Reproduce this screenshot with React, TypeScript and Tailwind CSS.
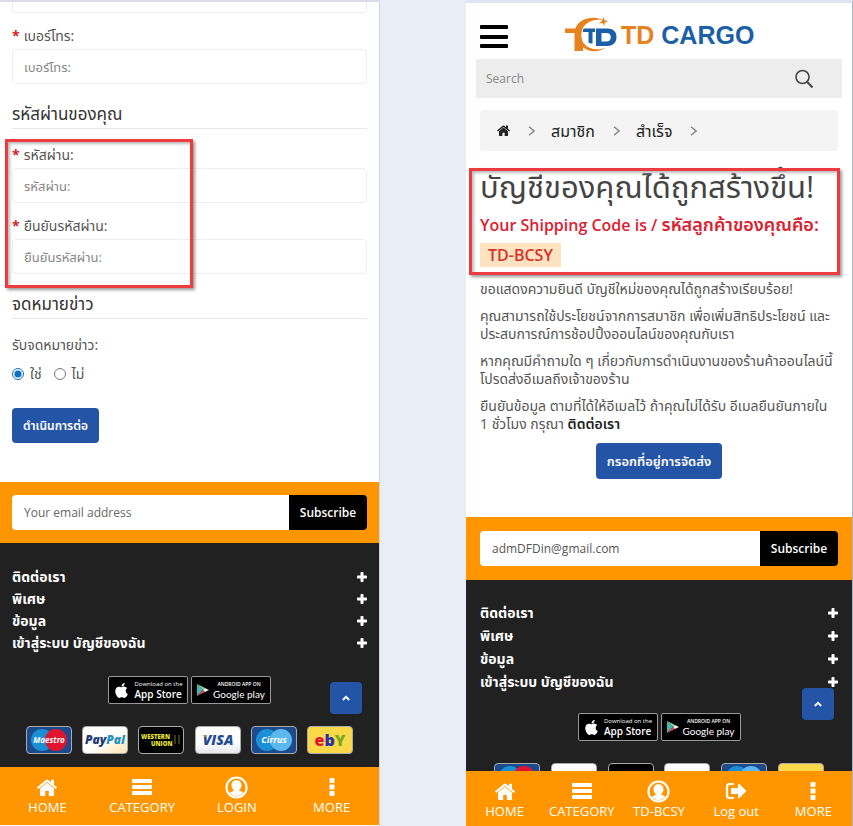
import type { ReactNode } from "react";
import { FaApple } from "react-icons/fa";

const FOOTER_LINKS = ["ติดต่อเรา", "พิเศษ", "ข้อมูล", "เข้าสู่ระบบ บัญชีของฉัน"];

function HomeIcon({ className }: { className: string }) {
  return (
    <svg viewBox="0 0 20 17" className={className} fill="currentColor" role="img" aria-label="Home">
      <path d="M10 3.800 3 9.600V16c0 .5.4.9.9.9h4.300v-5h3.600v5h4.300c.5 0 .9-.4.9-.9V9.600z" />
      <path d="M19.700 8.100 17 5.900V1.200c0-.3-.2-.5-.5-.5h-2.200c-.3 0-.5.2-.5.500v2.100L11.200 1.100c-.7-.6-1.700-.6-2.400 0L.3 8.100c-.2.2-.2.5-.1.700l.8.900c.2.200.5.200.7.100L10 2.900l8.300 6.900c.2.100.5.100.7-.1l.8-.9c.2-.2.1-.5-.1-.7z" />
    </svg>
  );
}

function BarsIcon() {
  return (
    <svg viewBox="0 0 20 16" className="h-4 w-5" fill="currentColor" aria-hidden="true">
      <rect width="20" height="4" rx="0.800" />
      <rect width="20" height="4" y="6" rx="0.800" />
      <rect width="20" height="4" y="12" rx="0.800" />
    </svg>
  );
}

function UserIcon() {
  return (
    <svg viewBox="0 0 24 24" className="size-[23px]" aria-hidden="true">
      <defs>
        <clipPath id="user-clip">
          <circle cx="12" cy="12" r="9" />
        </clipPath>
      </defs>
      <circle cx="12" cy="12" r="10.5" fill="none" stroke="currentColor" strokeWidth="2.200" />
      <g clipPath="url(#user-clip)" fill="currentColor">
        <path d="M12 4.500c3.200 0 5.200 2.200 5.200 5.100 0 2.200-.9 3.900-2.400 5v.8c2.500.8 4.700 1.700 5.200 3.400V23H4v-4c.5-1.700 2.700-2.800 5.200-3.600v-.8c-1.500-1.100-2.400-2.800-2.400-5 0-2.900 2-5.100 5.200-5.100z" />
      </g>
    </svg>
  );
}

function MoreIcon() {
  return (
    <svg viewBox="0 0 6 18" className="h-[18px] w-1.5" fill="currentColor" aria-hidden="true">
      <rect width="5" height="5" x="0.5" rx="0.8" />
      <rect width="5" height="5" x="0.5" y="6.500" rx="0.8" />
      <rect width="5" height="5" x="0.5" y="13" rx="0.8" />
    </svg>
  );
}

function LogoutIcon() {
  return (
    <svg viewBox="0 0 22 18" className="h-[18px] w-[22px]" aria-hidden="true">
      <path d="M8 2H4.500A2.500 2.500 0 0 0 2 4.500v9A2.500 2.500 0 0 0 4.500 16H8" fill="none" stroke="currentColor" strokeWidth="2.200" strokeLinecap="round" />
      <path d="M7 6h6V2.200c0-.7.7-.9 1.200-.4l6.500 6.500c.4.4.4 1 0 1.400l-6.500 6.500c-.5.5-1.200.3-1.200-.4V12H7c-.6 0-1-.4-1-1V7c0-.6.4-1 1-1z" fill="currentColor" />
    </svg>
  );
}

function PlusIcon() {
  return (
    <svg viewBox="0 0 10 10" className="size-2.5" fill="currentColor" aria-hidden="true">
      <path d="M4.200 0h1.600c.4 0 .7.300.7.700v2.800h2.800c.4 0 .7.300.7.700v1.600c0 .4-.3.700-.7.700H6.500v2.800c0 .4-.3.700-.7.700H4.200c-.4 0-.7-.3-.7-.7V6.500H.7c-.4 0-.7-.3-.7-.7V4.200c0-.4.300-.7.700-.7h2.800V.7c0-.4.300-.7.700-.7z" />
    </svg>
  );
}

function SearchIcon() {
  return (
    <svg viewBox="0 0 20 20" className="size-5" fill="none" stroke="#444" strokeWidth="1.600" aria-hidden="true">
      <circle cx="8.500" cy="8" r="6.500" />
      <path d="m13 12.800 5.500 5.700" strokeWidth="2" />
    </svg>
  );
}

function Logo() {
  return (
    <a href="#" className="flex items-center gap-1" aria-label="TD CARGO">
      <svg viewBox="0 0 52 36" className="h-9 w-[52px]" aria-hidden="true">
        <path d="M0 11.500h17.500c-2 5-1.500 10 .5 14.500V34h-8.500V16H0z" fill="#e8821f" />
        <path d="M10 12C13 4 21 .5 29 .8c3 .1 6 .9 8.500 2.200C28 1.500 19 5.500 16.500 14c-2.300 8.500 3 16 11 17.800 5 1 9.500.3 13.500-1.300-4 3-9.500 4.500-15 3.500-6-1.200-10-4.500-12-9z" fill="#e8821f" />
        <path d="m38.500 0 1 3.300 3.500.9-3.200 1.500L39.300 9l-1.800-2.900-3.500.4 2.500-2.300z" fill="#e8821f" />
        <path d="M18.500 11.500H30V15h-2.500v11.500c-1.600.2-3-.1-4-.9V15h-5.700c.1-1.200.3-2.400.7-3.500z" fill="#1b5fa8" />
        <path d="M31 11.500h11.500c5.500 0 9 3 9 8.500s-3.500 9-9 9H31zm5.500 4.500v8.500h5c2.700 0 4.300-1.600 4.300-4.300S44.200 16 41.500 16z" fill="#1b5fa8" fillRule="evenodd" />
      </svg>
      <span className="font-['Liberation_Sans',sans-serif] text-[25px] leading-9 font-bold whitespace-nowrap text-[#1b5fa8]">
        <span className="text-[#e8821f]">TD</span> CARGO
      </span>
    </a>
  );
}

function Field({ id, label, type = "text" }: { id: string; label: string; type?: string }) {
  return (
    <div className="mt-2.5">
      <label htmlFor={id} className="flex h-[26px] items-center gap-1 text-sm text-[#555]">
        <span className="leading-none font-bold text-[#d9201f]">*</span>
        {label}
      </label>
      <input
        id={id}
        type={type}
        placeholder={label}
        className="block h-[35px] w-full rounded-[4px] border border-[#eee] bg-white px-[11px] text-[13px] placeholder:text-[#888]"
      />
    </div>
  );
}

function SectionTitle({ children }: { children: ReactNode }) {
  return (
    <h2 className="mt-4 flex h-[29px] items-center border-b border-[#e8e8e8] text-[17px] text-[#333]">{children}</h2>
  );
}

// red frame drawn over the part of the screen that is being explained
function Highlight({ className }: { className: string }) {
  return (
    <div
      className={`pointer-events-none absolute border-3 border-[#ee3b40] shadow-[2px_2px_3px_#999,inset_2px_2px_3px_#bbb] ${className}`}
    />
  );
}

function Subscribe({ id, email, className }: { id: string; email?: string; className: string }) {
  return (
    <form className={`flex bg-[#ff9600] ${className}`}>
      <input
        id={id}
        type="email"
        aria-label="Your email address"
        placeholder="Your email address"
        defaultValue={email}
        className="h-[35px] min-w-0 flex-1 rounded-l-[4px] bg-white px-3 text-xs text-[#555] placeholder:text-[#666]"
      />
      <button type="button" className="h-[35px] w-[78px] shrink-0 rounded-r-[4px] bg-black text-xs font-semibold text-white">
        Subscribe
      </button>
    </form>
  );
}

function StoreBadges({ className }: { className: string }) {
  return (
    <div className={`flex justify-center gap-[3px] ${className}`}>
      <a href="#" className="flex h-7 w-20 items-center justify-center gap-1 rounded-[2px] border border-[#999] bg-black text-white">
        <FaApple className="size-[17px] shrink-0" />
        <span className="flex flex-col">
          <span className="text-[6px] leading-[7px] whitespace-nowrap">Download on the</span>
          <span className="text-[10px] leading-3 font-semibold whitespace-nowrap">App Store</span>
        </span>
      </a>
      <a href="#" className="flex h-7 w-20 items-center justify-center gap-1 rounded-[2px] border border-[#999] bg-black text-white">
        <svg viewBox="0 0 12 12" className="size-3 shrink-0" aria-hidden="true">
          <path d="M0 0v12l6-6z" fill="#3fb8b0" />
          <path d="m0 0 8 4-2 2z" fill="#8fd39a" />
          <path d="m0 12 8-4-2-2z" fill="#e5484d" />
          <path d="m8 4 4 2-4 2-2-2z" fill="#eee" />
        </svg>
        <span className="flex flex-col items-center">
          <span className="text-[5px] leading-[7px] font-semibold whitespace-nowrap">ANDROID APP ON</span>
          <span className="font-['Lato',sans-serif] text-[10px] leading-3 whitespace-nowrap">Google play</span>
        </span>
      </a>
    </div>
  );
}

function PaymentCards({ className }: { className: string }) {
  const card = "h-7 w-[46px] shrink-0 rounded-[4px] border border-[#aaa]";
  return (
    <ul className={`flex justify-between ${className}`}>
      <li className={`${card} bg-[#1c4a8c]`}>
        <svg viewBox="0 0 44 26" role="img" aria-label="Maestro">
          <circle cx="15" cy="13" r="11" fill="#1b8fd6" />
          <circle cx="29" cy="13" r="11" fill="#e0142f" />
          <text x="22" y="16" textAnchor="middle" fill="#fff" className="font-['Open_Sans',sans-serif] text-[8px] font-bold italic">Maestro</text>
        </svg>
      </li>
      <li className={`${card} bg-linear-to-br from-white from-50% to-[#fce3b0]`}>
        <svg viewBox="0 0 44 26" role="img" aria-label="PayPal">
          <text x="22" y="17" textAnchor="middle" fill="#1f3d78" className="font-['Open_Sans',sans-serif] text-[12px] font-extrabold italic">
            Pay<tspan fill="#2790c3">Pal</tspan>
          </text>
        </svg>
      </li>
      <li className={`${card} bg-black`}>
        <svg viewBox="0 0 44 26" role="img" aria-label="Western Union">
          <g fill="#e8e337" className="font-['Open_Sans',sans-serif] text-[6px] font-extrabold">
            <text x="2" y="12">WESTERN</text>
            <text x="12" y="19">UNION</text>
          </g>
          <path d="M36 8v9M40 8v9" stroke="#77741f" />
        </svg>
      </li>
      <li className={`${card} bg-linear-to-b from-white from-60% to-[#e4e6ea]`}>
        <svg viewBox="0 0 44 26" role="img" aria-label="Visa">
          <text x="22" y="18" textAnchor="middle" fill="#1f4d8f" className="font-['Open_Sans',sans-serif] text-[14px] font-extrabold italic">VISA</text>
          <path d="m5.500 8 4 .2 1 2.500c-1.300-1.200-3-2-5-2.700z" fill="#e8a33a" />
        </svg>
      </li>
      <li className={`${card} bg-[#1c4a8c]`}>
        <svg viewBox="0 0 44 26" role="img" aria-label="Cirrus">
          <circle cx="15" cy="13" r="11" fill="#1b8fd6" />
          <circle cx="29" cy="13" r="11" fill="#5bb8ee" />
          <text x="22" y="16" textAnchor="middle" fill="#fff" className="font-['Open_Sans',sans-serif] text-[9px] font-bold italic">Cirrus</text>
        </svg>
      </li>
      <li className={`${card} bg-[#f9d849]`}>
        <svg viewBox="0 0 44 26" role="img" aria-label="eBay">
          <text x="22" y="19" textAnchor="middle" fill="#e0142f" className="font-['Open_Sans',sans-serif] text-[16px] font-extrabold">
            e<tspan fill="#2a2fb0">b</tspan>
            <tspan fill="#7da81f">Y</tspan>
          </text>
        </svg>
      </li>
    </ul>
  );
}

function FooterLinks({ rowClass }: { rowClass: string }) {
  return (
    <ul>
      {FOOTER_LINKS.map((name) => (
        <li key={name} className={`flex items-center justify-between text-sm font-bold text-white ${rowClass}`}>
          <a href="#">{name}</a>
          <button type="button" aria-label={`+ ${name}`}>
            <PlusIcon />
          </button>
        </li>
      ))}
    </ul>
  );
}

function BackToTop({ className }: { className: string }) {
  return (
    <button
      type="button"
      aria-label="Back to top"
      className={`absolute flex size-8 items-center justify-center rounded-[4px] bg-[#2454a6] text-white ${className}`}
    >
      <svg viewBox="0 0 8 6" className="h-1.5 w-2" fill="none" stroke="currentColor" strokeWidth="1.800" aria-hidden="true">
        <path d="m.8 5 3.200-3.200L7.200 5" />
      </svg>
    </button>
  );
}

type Tab = { label: string; icon: ReactNode };

function BottomNav({ tabs, className }: { tabs: Tab[]; className: string }) {
  return (
    <nav className={`z-10 grid shrink-0 auto-cols-fr grid-flow-col bg-[#ff9600] ${className}`}>
      {tabs.map((tab) => (
        <a key={tab.label} href="#" className="flex flex-col items-center text-[13px] leading-4 font-medium whitespace-nowrap text-white">
          <span className="flex h-6 items-center justify-center">{tab.icon}</span>
          {tab.label}
        </a>
      ))}
    </nav>
  );
}

const homeTab = { label: "HOME", icon: <HomeIcon className="h-[17px] w-5" /> };
const categoryTab = { label: "CATEGORY", icon: <BarsIcon /> };
const moreTab = { label: "MORE", icon: <MoreIcon /> };

function RegisterScreen() {
  return (
    <section className="flex h-screen min-w-0 flex-col border-t-2 border-r border-t-[#dcdce6] border-r-[#cfd3dc] bg-white pb-px">
      <div className="min-h-0 flex-1 overflow-hidden">
        <form className="px-3 pb-[39px]">
          <div className="h-[11px] rounded-b-[4px] border border-t-0 border-[#eee]" />
          <Field id="phone" label="เบอร์โทร:" />
          <SectionTitle>รหัสผ่านของคุณ</SectionTitle>
          <div className="relative pt-[3px]">
            <Field id="password" label="รหัสผ่าน:" type="password" />
            <Field id="confirm" label="ยืนยันรหัสผ่าน:" type="password" />
            <Highlight className="top-2.5 -bottom-3.5 -left-[7px] w-[188px]" />
          </div>
          <SectionTitle>จดหมายข่าว</SectionTitle>
          <div role="radiogroup" aria-labelledby="newsletter-label" className="pt-[13px] text-sm text-[#555]">
            <p id="newsletter-label" className="flex h-[26px] items-center">รับจดหมายข่าว:</p>
            <div className="mt-1.5 flex h-5 items-center gap-3">
              <label className="flex items-center gap-1.5">
                <input type="radio" name="newsletter" defaultChecked className="size-3 accent-[#0b6fc7]" />
                ใช่
              </label>
              <label className="flex items-center gap-1.5">
                <input type="radio" name="newsletter" className="size-3" />
                ไม่
              </label>
            </div>
          </div>
          <button type="button" className="mt-6 block h-[35px] rounded-[4px] bg-[#2454a6] px-[11px] text-xs font-semibold text-white">
            ดำเนินการต่อ
          </button>
        </form>
        <Subscribe id="email-left" className="px-3 py-[13px]" />
        <footer className="relative bg-[#212121] px-3 pt-[23px] pb-4">
          <FooterLinks rowClass="h-[22px]" />
          <StoreBadges className="mt-[22px]" />
          <PaymentCards className="mx-3.5 mt-[22px]" />
          <BackToTop className="top-[139px] right-[17px]" />
        </footer>
      </div>
      <BottomNav
        className="h-[58px] pt-2"
        tabs={[homeTab, categoryTab, { label: "LOGIN", icon: <UserIcon /> }, moreTab]}
      />
    </section>
  );
}

function Crumb({ children }: { children: ReactNode }) {
  return (
    <li className="flex items-center gap-[18px]">
      <a href="#">{children}</a>
      <svg viewBox="0 0 7 10" className="h-2.5 w-[7px]" fill="none" stroke="#888" strokeWidth="1.500" aria-hidden="true">
        <path d="m1 .8 5 4.200-5 4.200" />
      </svg>
    </li>
  );
}

function SuccessScreen() {
  return (
    <section className="flex h-screen min-w-0 flex-col border-t-3 border-r border-t-[#dfe5f0] border-r-[#aeb4be] bg-white">
      <div className="min-h-0 flex-1 overflow-hidden">
        <header className="relative flex h-14 items-center pt-2 pl-[99px]">
          <button type="button" aria-label="Menu" className="absolute top-[22px] left-3.5 flex h-[23px] w-7 flex-col justify-between">
            <span className="h-1 w-full rounded-[1px] bg-black" />
            <span className="h-1 w-full rounded-[1px] bg-black" />
            <span className="h-1 w-full rounded-[1px] bg-black" />
          </button>
          <Logo />
        </header>
        <form className="mx-2.5 flex h-[39px] items-center bg-[#ededed] pr-7 pl-2.5">
          <input type="search" aria-label="Search" placeholder="Search" className="min-w-0 flex-1 bg-transparent text-xs placeholder:text-[#888]" />
          <button type="button" aria-label="Submit search">
            <SearchIcon />
          </button>
        </form>
        <nav aria-label="Breadcrumb" className="mx-3.5 mt-3 rounded-[4px] bg-[#f4f4f4]">
          <ol className="flex h-[41px] items-center gap-4 pl-[17px] text-base text-[#222]">
            <Crumb>
              <HomeIcon className="h-[11px] w-[13px]" />
            </Crumb>
            <Crumb>สมาชิก</Crumb>
            <Crumb>สำเร็จ</Crumb>
          </ol>
        </nav>
        <main className="px-3.5 pb-[38px] text-sm leading-[18px] text-[#555]">
          <div className="relative pt-[17px]">
            <h1 className="text-[31px] leading-9 whitespace-nowrap text-[#444]">บัญชีของคุณได้ถูกสร้างขึ้น!</h1>
            <p className="mt-2 text-base leading-6 font-semibold whitespace-nowrap text-[#dd2030]">
              Your Shipping Code is / <span className="text-lg leading-6">รหัสลูกค้าของคุณคือ:</span>
            </p>
            <p className="mt-1.5 w-fit bg-[#fde3c0] px-2 text-base leading-6 font-semibold text-[#d8302a]">TD-BCSY</p>
            <Highlight className="top-[17px] -right-0.5 -bottom-2 -left-[11px]" />
          </div>
          <p className="mt-[13px]">ขอแสดงความยินดี บัญชีใหม่ของคุณได้ถูกสร้างเรียบร้อย!</p>
          <p className="mt-[9px] whitespace-nowrap">
            คุณสามารถใช้ประโยชน์จากการสมาชิก เพื่อเพิ่มสิทธิประโยชน์ และ
            <br />
            ประสบการณ์การช้อปปิ้งออนไลน์ของคุณกับเรา
          </p>
          <p className="mt-[9px] whitespace-nowrap">
            หากคุณมีคำถามใด ๆ เกี่ยวกับการดำเนินงานของร้านค้าออนไลน์นี้
            <br />
            โปรดส่งอีเมลถึงเจ้าของร้าน
          </p>
          <p className="mt-[9px] whitespace-nowrap">
            ยืนยันข้อมูล ตามที่ได้ให้อีเมลไว้ ถ้าคุณไม่ได้รับ อีเมลยืนยันภายใน
            <br />1 ชั่วโมง กรุณา{" "}
            <a href="#" className="font-semibold text-[#222]">
              ติดต่อเรา
            </a>
          </p>
          <button type="button" className="mx-auto mt-2.5 block h-9 rounded-[4px] bg-[#2454a6] px-[11px] text-[13px] font-semibold text-white">
            กรอกที่อยู่การจัดส่ง
          </button>
        </main>
        <Subscribe id="email-right" email="admDFDin@gmail.com" className="px-3.5 py-3.5" />
        <footer className="relative bg-[#212121] px-3.5 pt-[21px] pb-4">
          <FooterLinks rowClass="h-[23px]" />
          <StoreBadges className="mt-5" />
          <PaymentCards className="mx-3.5 mt-[22px]" />
          <BackToTop className="top-[108px] right-[18px]" />
        </footer>
      </div>
      <BottomNav
        className="h-[55px] pt-2"
        tabs={[homeTab, categoryTab, { label: "TD-BCSY", icon: <UserIcon /> }, { label: "Log out", icon: <LogoutIcon /> }, moreTab]}
      />
    </section>
  );
}

export default function App() {
  return (
    <div className="grid grid-cols-[380fr_387fr] gap-x-[86px] overflow-hidden bg-[#e8edf6] font-['Open_Sans','Noto_Sans_Thai',sans-serif]">
      <RegisterScreen />
      <SuccessScreen />
    </div>
  );
}
